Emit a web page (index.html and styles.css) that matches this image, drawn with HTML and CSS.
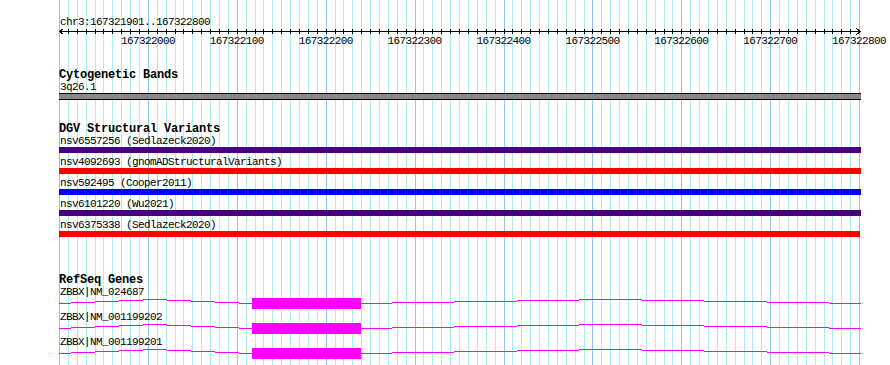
FILE: index.html
```html
<!DOCTYPE html>
<html lang="en">
<head>
  <meta charset="UTF-8">
  <title>chr3:167321901..167322800</title>
  <link rel="stylesheet" href="styles.css">
</head>
<body>
  <div class="browser">
    <div class="grid" id="grid"></div>

    <section class="ruler">
      <div class="pos">chr3:167321901..167322800</div>
      <svg class="scale" width="803" height="7" viewBox="0 0 803 7" shape-rendering="crispEdges">
        <g id="ruler-ticks" stroke="#000"></g>
        <path d="M0 3.5H802" stroke="#000"/>
        <path d="M4.5 0.5L0.5 3.5L4.5 6.5M797.5 0.5L801.5 3.5L797.5 6.5" fill="none" stroke="#000"/>
      </svg>
      <div class="tick-labels">
        <span>167322000</span>
        <span>167322100</span>
        <span>167322200</span>
        <span>167322300</span>
        <span>167322400</span>
        <span>167322500</span>
        <span>167322600</span>
        <span>167322700</span>
        <span>167322800</span>
      </div>
    </section>

    <section class="track cyto">
      <h2 class="track-title">Cytogenetic Bands</h2>
      <div class="feat-label">3q26.1</div>
      <div class="band"></div>
    </section>

    <section class="track dgv">
      <h2 class="track-title">DGV Structural Variants</h2>
      <div class="sv">
        <div class="feat-label">nsv6557256 (Sedlazeck2020)</div>
        <div class="bar loss"></div>
      </div>
      <div class="sv">
        <div class="feat-label">nsv4092693 (gnomADStructuralVariants)</div>
        <div class="bar gain"></div>
      </div>
      <div class="sv">
        <div class="feat-label">nsv592495 (Cooper2011)</div>
        <div class="bar dup"></div>
      </div>
      <div class="sv">
        <div class="feat-label">nsv6101220 (Wu2021)</div>
        <div class="bar loss"></div>
      </div>
      <div class="sv">
        <div class="feat-label">nsv6375338 (Sedlazeck2020)</div>
        <div class="bar gain short"></div>
      </div>
    </section>

    <section class="track genes">
      <h2 class="track-title">RefSeq Genes</h2>
      <div class="gene">
        <div class="feat-label">ZBBX|NM_024687</div>
        <svg class="tx" width="802" height="11" viewBox="0 0 802 11">
          <path class="intron" d="M0 5h12v1H0zM12 4h24v1H12zM36 3h24v1H36zM60 2h24v1H60zM84 1h24v1H84zM108 2h24v1h-24zM132 3h24v1h-24zM156 4h24v1h-24zM180 5h13v1h-13zM302 5h31v1h-31zM333 4h62v1h-62zM395 3h63v1h-63zM458 2h62v1h-62zM520 1h63v1h-63zM583 2h62v1h-62zM645 3h63v1h-63zM708 4h62v1h-62zM770 5h32v1h-32z"/>
          <rect class="exon" x="193" y="0" width="109" height="11"/>
        </svg>
      </div>
      <div class="gene">
        <div class="feat-label">ZBBX|NM_001199202</div>
        <svg class="tx" width="802" height="11" viewBox="0 0 802 11">
          <path class="intron" d="M0 5h12v1H0zM12 4h24v1H12zM36 3h24v1H36zM60 2h24v1H60zM84 1h24v1H84zM108 2h24v1h-24zM132 3h24v1h-24zM156 4h24v1h-24zM180 5h13v1h-13zM302 5h31v1h-31zM333 4h62v1h-62zM395 3h63v1h-63zM458 2h62v1h-62zM520 1h63v1h-63zM583 2h62v1h-62zM645 3h63v1h-63zM708 4h62v1h-62zM770 5h32v1h-32z"/>
          <rect class="exon" x="193" y="0" width="109" height="11"/>
        </svg>
      </div>
      <div class="gene">
        <div class="feat-label">ZBBX|NM_001199201</div>
        <svg class="tx" width="802" height="11" viewBox="0 0 802 11">
          <path class="intron" d="M0 5h12v1H0zM12 4h24v1H12zM36 3h24v1H36zM60 2h24v1H60zM84 1h24v1H84zM108 2h24v1h-24zM132 3h24v1h-24zM156 4h24v1h-24zM180 5h13v1h-13zM302 5h31v1h-31zM333 4h62v1h-62zM395 3h63v1h-63zM458 2h62v1h-62zM520 1h63v1h-63zM583 2h62v1h-62zM645 3h63v1h-63zM708 4h62v1h-62zM770 5h32v1h-32z"/>
          <rect class="exon" x="193" y="0" width="109" height="11"/>
        </svg>
      </div>
    </section>
  </div>

  <script>
    // 900 bp over 800 px, a guide line every 10 bp
    var BP10 = 8.89;

    var grid = document.getElementById("grid");
    for (var i = 0; i <= 90; i++) {
      var line = document.createElement("div");
      line.className = i % 10 === 0 ? "gl major" : "gl";
      line.style.left = (i * BP10) + "px";
      grid.appendChild(line);
    }

    var ticks = document.getElementById("ruler-ticks");
    for (var j = 1; j < 90; j++) {
      var x = Math.round(j * BP10) + 0.5;
      var t = document.createElementNS("http://www.w3.org/2000/svg", "path");
      t.setAttribute("d", "M" + x + " 1V6");
      ticks.appendChild(t);
    }
  </script>
</body>
</html>
```

FILE: styles.css
```css
html, body {
  margin: 0;
  overflow: hidden;
  background: #fff;
}
body {
  font-family: "Liberation Mono", "DejaVu Sans Mono", monospace;
  font-size: 11px;
  letter-spacing: -0.6px;
  line-height: 12px;
  color: #000;
}
.browser {
  position: relative;
  width: 890px;
  height: 365px;
  padding-left: 59px;
  box-sizing: border-box;
}
.grid {
  position: absolute;
  left: 59px;
  top: 0;
  width: 802px;
  height: 365px;
}
.gl {
  position: absolute;
  top: 0;
  bottom: 0;
  width: 1px;
  background: #aaeeee;
}
.gl.major {
  background: #88c8ec;
}
.ruler, .track {
  position: relative;
  width: 802px;
}
.ruler {
  padding-top: 16px;
}
.pos {
  height: 12px;
  padding-left: 1px;
}
.scale {
  display: block;
}
.tick-labels {
  display: flex;
  margin-left: 44.5px;
  height: 12px;
  white-space: nowrap;
}
.tick-labels span {
  flex: 0 0 88.9px;
  text-align: center;
}
.track-title {
  margin: 0;
  font-size: 12px;
  font-weight: bold;
  letter-spacing: -0.2px;
  line-height: 12px;
  height: 12px;
}
.feat-label {
  height: 12px;
  padding-left: 1px;
  white-space: nowrap;
}
.cyto {
  margin-top: 22px;
}
.band {
  height: 5px;
  width: 802px;
  background: #888888;
  border-top: 1px solid #000;
  border-bottom: 1px solid #000;
}
.dgv {
  margin-top: 23px;
}
.sv + .sv {
  margin-top: 3px;
}
.bar {
  height: 6px;
  width: 802px;
}
.bar.short {
  width: 801px;
}
.bar.loss { background: #4b0082; }
.bar.gain { background: #ff0000; }
.bar.dup { background: #0000ff; }
.genes {
  margin-top: 37px;
}
.gene + .gene {
  margin-top: 2px;
}
.tx {
  display: block;
  shape-rendering: crispEdges;
}
.tx .intron, .tx .exon {
  fill: #ff00ff;
}
```
